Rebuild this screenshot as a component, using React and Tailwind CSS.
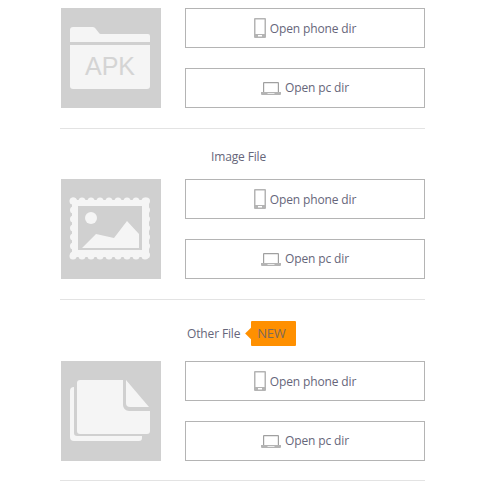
import React from 'react';

function PhoneIcon() {
  return (
    <svg width="12" height="20" viewBox="0 0 12 20" className="flex-none">
      <path fillRule="evenodd" fill="#b4b4b4" d="M1 0h10a1 1 0 0 1 1 1v18a1 1 0 0 1-1 1H1a1 1 0 0 1-1-1V1a1 1 0 0 1 1-1zM1.500 1.500V16h9V1.500zM4 17v1.500h4V17z" />
    </svg>
  );
}

function LaptopIcon() {
  return (
    <svg width="20" height="13" viewBox="0 0 20 13" className="flex-none">
      <path fill="#a0a0a0" d="M3 0h14a1 1 0 0 1 1 1v9h-1.200V1.200H3.200V10H2V1a1 1 0 0 1 1-1z" />
      <path fillRule="evenodd" fill="#b4b4b4" d="M0 10h20v2a1 1 0 0 1-1 1H1a1 1 0 0 1-1-1zM6.500 11v.8h7V11z" />
    </svg>
  );
}

function ApkIcon() {
  return (
    <svg width="100" height="100" viewBox="0 0 100 100">
      <path fill="#f5f5f5" d="M9 34V22a3 3 0 0 1 3-3h20a3 3 0 0 1 2.500 1.500L38 25a2 2 0 0 0 2 1h47a2 2 0 0 1 2 2v6z" />
      <path fill="#f5f5f5" d="M9 37h80v41a3 3 0 0 1-3 3H12a3 3 0 0 1-3-3z" />
      <text x="49" y="67" textAnchor="middle" fontSize="25" fontFamily="'Liberation Sans', sans-serif" fill="#d4d4d4">APK</text>
    </svg>
  );
}

function ImageIcon() {
  // stamp edge, small scallops along all four sides
  const top = [12, 21, 30, 39, 48, 57, 66, 75, 84];
  const side = [22, 31, 40, 49, 58, 67, 76];
  return (
    <svg width="100" height="100" viewBox="0 0 100 100">
      <rect x="11" y="21" width="77" height="57" fill="#f5f5f5" />
      {top.map((x) => (
        <g key={x}>
          <circle cx={x} cy="22" r="3.500" fill="#f5f5f5" />
          <circle cx={x} cy="77" r="3.500" fill="#f5f5f5" />
        </g>
      ))}
      {side.map((y) => (
        <g key={y}>
          <circle cx="12.500" cy={y} r="3.500" fill="#f5f5f5" />
          <circle cx="85.500" cy={y} r="3.500" fill="#f5f5f5" />
        </g>
      ))}
      <rect x="17" y="27" width="64" height="44" fill="#d0d0d0" />
      <circle cx="30" cy="39" r="6" fill="#f5f5f5" />
      <path fill="#f5f5f5" d="M21 69L35 55l18 4 13-17 12 13v14z" />
    </svg>
  );
}

function OtherIcon() {
  return (
    <svg width="100" height="100" viewBox="0 0 100 100">
      <path fill="#f5f5f5" d="M13 26v46a3 3 0 0 0 3 3h65v2a3 3 0 0 1-3 3H13a4 4 0 0 1-4-4V30a4 4 0 0 1 4-4z" />
      <path fill="#f5f5f5" d="M19 19h43v25a6 6 0 0 0 6 6h21v20a3 3 0 0 1-3 3H19a3 3 0 0 1-3-3V22a3 3 0 0 1 3-3z" />
      <path fill="#f5f5f5" d="M65 19l23 27H69a4 4 0 0 1-4-4z" />
    </svg>
  );
}

function FileRow({ icon }) {
  return (
    <div className="flex pl-[61px]">
      <div className="h-[100px] w-[100px] flex-none bg-[#d0d0d0]">{icon}</div>
      <div className="ml-6 flex flex-col gap-5">
        <button className="flex h-10 w-60 items-center justify-center gap-1 border border-[#b4b4b4] bg-white text-xs tracking-[-0.14px] text-[#66667a]">
          <PhoneIcon />
          <span className="pt-[2px]">Open phone dir</span>
        </button>
        <button className="flex h-10 w-60 items-center justify-center gap-1 border border-[#b4b4b4] bg-white text-xs tracking-[-0.14px] text-[#66667a]">
          <LaptopIcon />
          <span>Open pc dir</span>
        </button>
      </div>
    </div>
  );
}

export default function App() {
  return (
    <div className="h-[500px] w-[487px] overflow-hidden bg-white pt-2 font-['Open_Sans',sans-serif]">
      <FileRow icon={<ApkIcon />} />
      <div className="ml-[60px] mt-5 h-px w-[365px] bg-[#e3e3e3]" />

      <div className="ml-[211px] flex h-[50px] items-center pt-[6px] text-xs tracking-[-0.14px] text-[#66667a]">Image File</div>
      <FileRow icon={<ImageIcon />} />
      <div className="ml-[60px] mt-5 h-px w-[365px] bg-[#e3e3e3]" />

      <div className="ml-[187px] flex h-[61px] items-center pt-[6px] text-xs tracking-[-0.14px] text-[#66667a]">
        <span>Other File</span>
        <span className="relative ml-[11px] flex h-[25px] w-[45px] items-center rounded-[1px] bg-[#ff9000] pl-[6px] text-[13px] tracking-[-0.3px] text-[#806a5a]">
          <span className="absolute -left-[4px] top-[8px] h-[9px] w-[9px] rotate-45 bg-[#ff9000]" />
          <span className="relative">NEW</span>
        </span>
      </div>
      <FileRow icon={<OtherIcon />} />
      <div className="ml-[60px] mt-[19px] h-px w-[365px] bg-[#e3e3e3]" />
    </div>
  );
}
